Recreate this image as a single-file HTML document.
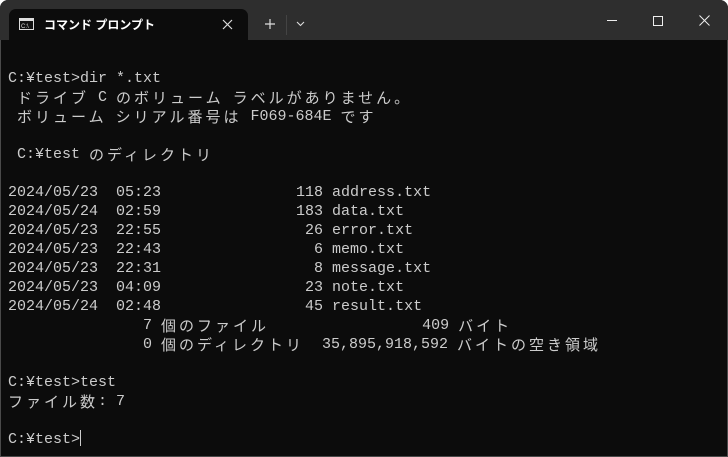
<!DOCTYPE html>
<html><head><meta charset="utf-8"><style>
html,body{margin:0;padding:0;background:#fff;}
body{width:728px;height:457px;overflow:hidden;position:relative;}
.win{position:absolute;left:0;top:0;width:728px;height:457px;background:#0c0c0c;border-radius:8px 8px 0 0;overflow:hidden;box-shadow:inset 0 0 0 1px #4a4a4a;}
.title{position:absolute;left:0;top:0;width:728px;height:40px;background:#2e2e2e;border-radius:8px 8px 0 0;}
.tab{position:absolute;left:9px;top:9px;width:239px;height:32px;background:#0c0c0c;border-radius:7px 7px 0 0;}
.tabt{position:absolute;left:44px;top:16px;color:#fff;font:bold 12px "Liberation Sans","Noto Sans CJK JP",sans-serif;}
.t{position:absolute;left:8px;top:69px;color:#cccccc;font:15px "Liberation Mono",monospace;}
.t div{height:19px;line-height:19px;white-space:pre;overflow:visible;}
.j{font-family:"Noto Sans CJK JP",sans-serif;letter-spacing:3px;font-size:15px;line-height:19px;display:inline-block;height:19px;vertical-align:top;}
.cur{display:inline-block;width:1px;height:16px;background:#ccc;vertical-align:-3px;}
</style></head><body>
<div class="win">
<div class="title">
<div class="tab"></div>
<svg style="position:absolute;left:19px;top:18px" width="15" height="12"><rect x="0.5" y="0.5" width="14" height="11" fill="#111" stroke="#ddd"/><rect x="1" y="1" width="13" height="2" fill="#ddd"/><text x="2" y="10" font-size="6" fill="#ddd" font-family="Liberation Sans">C:\_</text></svg>
<div class="tabt">コマンド プロンプト</div>
<svg style="position:absolute;left:222px;top:19px" width="11" height="11"><path d="M1 1L10 10M10 1L1 10" stroke="#ddd" stroke-width="1.2"/></svg>
<svg style="position:absolute;left:264px;top:18px" width="12" height="12"><path d="M6 1V11M1 6H11" stroke="#ddd" stroke-width="1.2"/></svg>
<div style="position:absolute;left:286px;top:15px;width:1px;height:20px;background:#444"></div>
<svg style="position:absolute;left:296px;top:21px" width="9" height="6"><path d="M1 1L4.5 4.5L8 1" stroke="#ddd" fill="none" stroke-width="1.1"/></svg>
<div style="position:absolute;left:607px;top:20px;width:10px;height:1px;background:#eee"></div>
<div style="position:absolute;left:653px;top:16px;width:8px;height:8px;border:1px solid #eee"></div>
<svg style="position:absolute;left:699px;top:15px" width="11" height="11"><path d="M0.5 0.5L10.5 10.5M10.5 0.5L0.5 10.5" stroke="#eee" stroke-width="1"/></svg>
</div>
<div class="t">
<div>C:¥test&gt;dir *.txt</div>
<div> <span class="j">ドライブ</span> C <span class="j">のボリューム</span> <span class="j">ラベルがありません。</span></div>
<div> <span class="j">ボリューム</span> <span class="j">シリアル番号は</span> F069-684E <span class="j">です</span></div>
<div></div>
<div> C:¥test <span class="j">のディレクトリ</span></div>
<div></div>
<div>2024/05/23  05:23               118 address.txt</div>
<div>2024/05/24  02:59               183 data.txt</div>
<div>2024/05/23  22:55                26 error.txt</div>
<div>2024/05/23  22:43                 6 memo.txt</div>
<div>2024/05/23  22:31                 8 message.txt</div>
<div>2024/05/23  04:09                23 note.txt</div>
<div>2024/05/24  02:48                45 result.txt</div>
<div>               7 <span class="j">個のファイル</span>                 409 <span class="j">バイト</span></div>
<div>               0 <span class="j">個のディレクトリ</span>  35,895,918,592 <span class="j">バイトの空き領域</span></div>
<div></div>
<div>C:¥test&gt;test</div>
<div><span class="j">ファイル数</span>: 7</div>
<div></div>
<div>C:¥test&gt;<span class="cur"></span></div>
</div>
</div>
</body></html>
